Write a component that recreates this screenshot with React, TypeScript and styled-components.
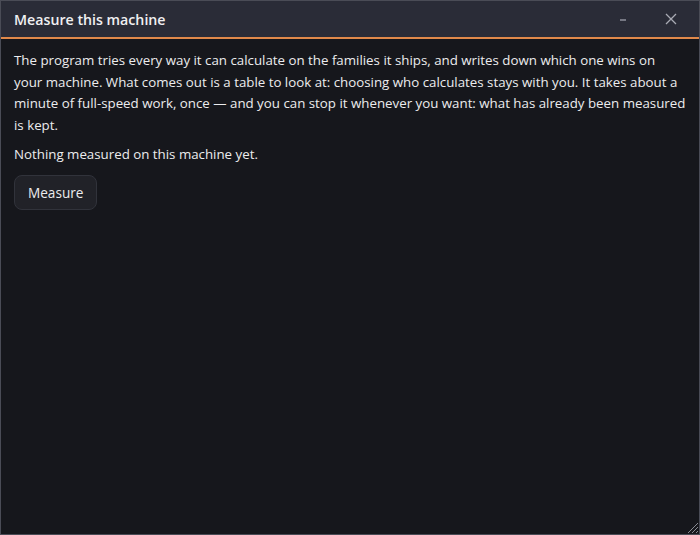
import React from "react";
import styled, { createGlobalStyle } from "styled-components";

const GlobalStyle = createGlobalStyle`
  html, body {
    margin: 0;
    padding: 0;
    background: #16171c;
  }
  * {
    box-sizing: border-box;
  }
`;

const Window = styled.div`
  position: relative;
  width: 700px;
  height: 535px;
  display: flex;
  flex-direction: column;
  background: #16171c;
  border: 1px solid #4a4c56;
  font-family: "Open Sans", "Noto Sans", sans-serif;
  color: #e8e8ea;
  overflow: hidden;
`;

const TitleBar = styled.div`
  height: 38px;
  flex-shrink: 0;
  display: flex;
  align-items: center;
  padding: 0 12px 0 13px;
  background: #2a2c37;
  border-bottom: 2px solid #e0894a;
`;

const Title = styled.div`
  flex: 1;
  font-size: 14.2px;
  font-weight: 600;
  color: #f0f0f2;
`;

const TitleButton = styled.button`
  width: 32px;
  height: 26px;
  margin-left: 16px;
  display: flex;
  align-items: center;
  justify-content: center;
  padding: 0;
  background: transparent;
  border: none;
  color: #a9abb4;
  cursor: pointer;
`;

const Body = styled.div`
  flex: 1;
  display: flex;
  flex-direction: column;
  align-items: flex-start;
  gap: 8px;
  padding: 11px 13px;
`;

const Paragraph = styled.p`
  margin: 0;
  font-size: 13.3px;
  line-height: 21.6px;
  color: #ececee;
`;

const ActionButton = styled.button`
  margin-top: 1px;
  height: 35px;
  padding: 0 13px;
  font-family: inherit;
  font-size: 13.6px;
  color: #ececee;
  background: #212228;
  border: 1px solid #31333b;
  border-radius: 8px;
  cursor: pointer;
`;

const Grip = styled.svg`
  position: absolute;
  right: 0;
  bottom: 0;
`;

export default function App() {
  return (
    <>
      <GlobalStyle />
      <Window>
        <TitleBar>
          <Title>Measure this machine</Title>
          <TitleButton aria-label="Minimize">
            <svg width="10" height="10" viewBox="0 0 10 10">
              <line x1="2" y1="6" x2="8" y2="6" stroke="currentColor" strokeWidth="1.2" />
            </svg>
          </TitleButton>
          <TitleButton aria-label="Close">
            <svg width="14" height="14" viewBox="0 0 14 14">
              <path d="M2 2 L12 12 M12 2 L2 12" stroke="currentColor" strokeWidth="1.3" />
            </svg>
          </TitleButton>
        </TitleBar>
        <Body>
          <Paragraph>
            The program tries every way it can calculate on the families it ships, and writes down
            which one wins on your machine. What comes out is a table to look at: choosing who
            calculates stays with you. It takes about a minute of full-speed work, once — and you
            can stop it whenever you want: what has already been measured is kept.
          </Paragraph>
          <Paragraph>Nothing measured on this machine yet.</Paragraph>
          <ActionButton>Measure</ActionButton>
        </Body>
        <Grip width="14" height="14" viewBox="0 0 14 14">
          <path d="M13 3 L3 13 M13 7 L7 13 M13 11 L11 13" stroke="#8a8c94" strokeWidth="1" />
        </Grip>
      </Window>
    </>
  );
}
